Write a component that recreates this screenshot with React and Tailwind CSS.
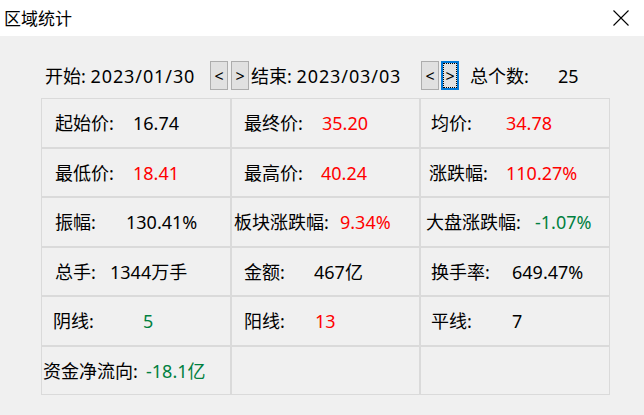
import React from "react";

const R = "text-[#ff0000]";
const G = "text-[#008040]";
const K = "text-black";

const rows = [
  [
    { l: "起始价:", v: "16.74", c: K, pl: "pl-[13px]", w: "w-[78px]" },
    { l: "最终价:", v: "35.20", c: R, pl: "pl-[12px]", w: "w-[78px]" },
    { l: "均价:", v: "34.78", c: R, pl: "pl-[10px]", w: "w-[75px]" },
  ],
  [
    { l: "最低价:", v: "18.41", c: R, pl: "pl-[13px]", w: "w-[78px]" },
    { l: "最高价:", v: "40.24", c: R, pl: "pl-[12px]", w: "w-[77px]" },
    { l: "涨跌幅:", v: "110.27%", c: R, pl: "pl-[8px]", w: "w-[77px]" },
  ],
  [
    { l: "振幅:", v: "130.41%", c: K, pl: "pl-[13px]", w: "w-[71px]" },
    { l: "板块涨跌幅:", v: "9.34%", c: R, pl: "pl-[2px]", w: "w-[106px]" },
    { l: "大盘涨跌幅:", v: "-1.07%", c: G, pl: "pl-[5px]", w: "w-[109px]" },
  ],
  [
    { l: "总手:", v: "1344万手", c: K, pl: "pl-[13px]", w: "w-[55px]" },
    { l: "金额:", v: "467亿", c: K, pl: "pl-[12px]", w: "w-[70px]" },
    { l: "换手率:", v: "649.47%", c: K, pl: "pl-[10px]", w: "w-[81px]" },
  ],
  [
    { l: "阴线:", v: "5", c: G, pl: "pl-[11px]", w: "w-[90px]" },
    { l: "阳线:", v: "13", c: R, pl: "pl-[12px]", w: "w-[71px]" },
    { l: "平线:", v: "7", c: K, pl: "pl-[10px]", w: "w-[81px]" },
  ],
  [
    { l: "资金净流向:", v: "-18.1亿", c: G, pl: "pl-[1px]", w: "w-[103px]" },
    null,
    null,
  ],
];

function Btn({ children, focus }) {
  return (
    <div
      className={
        "flex h-[29px] w-[18px] items-center justify-center bg-[#e1e1e1] text-[16px] leading-none text-black " +
        (focus ? "border-2 border-[#0078d7]" : "border border-[#adadad]")
      }
    >
      {focus ? (
        <div className="flex h-full w-full items-center justify-center border border-dotted border-black">
          {children}
        </div>
      ) : (
        children
      )}
    </div>
  );
}

export default function App() {
  return (
    <div className="flex h-[415px] w-[644px] flex-col overflow-hidden bg-[#f0f0f0] font-['Noto_Sans','Noto_Sans_CJK_SC',sans-serif] text-black">
      <div className="flex h-[36px] shrink-0 items-center justify-between bg-white pl-[4px] pr-[15px]">
        <span className="text-[17px] leading-none">区域统计</span>
        <svg width="16" height="16" viewBox="0 0 16 16">
          <path d="M0.5 0.5L15.5 15.5M15.5 0.5L0.5 15.5" stroke="#000" strokeWidth="1.1" fill="none" />
        </svg>
      </div>
      <div className="flex flex-col pl-[41px] pt-[25px] text-[18px]">
        <div className="flex h-[29px] items-center">
          <span className="ml-[4px] w-[165px] whitespace-nowrap leading-none">
            开始: <span className="tracking-[0.9px]">2023/01/30</span>
          </span>
          <Btn>&lt;</Btn>
          <div className="ml-[3px]">
            <Btn>&gt;</Btn>
          </div>
          <span className="ml-[2px] w-[170px] whitespace-nowrap leading-none">
            结束: <span className="tracking-[0.9px]">2023/03/03</span>
          </span>
          <Btn>&lt;</Btn>
          <div className="ml-[2px]">
            <Btn focus>&gt;</Btn>
          </div>
          <span className="ml-[11px] w-[88px] whitespace-nowrap leading-none">总个数:</span>
          <span className="leading-none">25</span>
        </div>
        <div className="mt-[8px] grid grid-cols-[190px_189px_190px] grid-rows-[50px_49px_50px_49px_50px_49px]">
          {rows.flat().map((c, i) => (
            <div
              key={i}
              className={
                "flex items-center border border-[#dadada] whitespace-nowrap leading-none " +
                (c ? c.pl : "")
              }
            >
              {c && (
                <>
                  <span className={"inline-block " + c.w}>{c.l}</span>
                  <span className={c.c}>{c.v}</span>
                </>
              )}
            </div>
          ))}
        </div>
      </div>
    </div>
  );
}
